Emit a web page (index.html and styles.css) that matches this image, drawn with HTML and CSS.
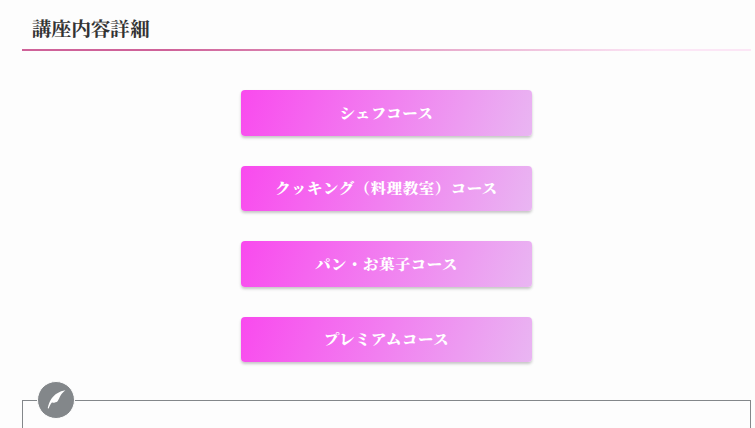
FILE: index.html
```html
<!DOCTYPE html>
<html lang="ja">
<head>
    <meta charset="UTF-8">
    <meta name="viewport" content="width=device-width, initial-scale=1">
    <title>講座内容詳細</title>
    <link rel="stylesheet" href="styles.css">
</head>
<body>
    <main class="content">
        <h2 class="section-title">講座内容詳細</h2>

        <nav class="course-list">
            <a href="#chef" class="course-btn">シェフコース</a>
            <a href="#cooking" class="course-btn">クッキング（料理教室）コース</a>
            <a href="#bread" class="course-btn">パン・お菓子コース</a>
            <a href="#premium" class="course-btn">プレミアムコース</a>
        </nav>

        <section class="memo-box">
            <span class="memo-icon">
                <svg viewBox="0 0 36 36" width="36" height="36">
                    <path d="M27.4 8.3C21.5 9.3 16.5 12.3 13.4 16.8C11.5 19.6 10.4 23 9.7 26.2L10.7 26.6C11.6 24.3 12.4 22.3 13.9 20.6C15.8 20.9 18.2 20.4 19.6 19.2C21 17.6 21.3 15.8 22.6 13.6C23.8 11.5 25.4 9.8 27.4 8.3Z" fill="#fff"/>
                </svg>
            </span>
        </section>
    </main>
</body>
</html>
```
FILE: styles.css
```css
* {
    box-sizing: border-box;
    margin: 0;
    padding: 0;
}

body {
    background: #fdfdfd;
    color: #333;
    font-family: "Noto Serif JP", "Noto Serif CJK JP", "Liberation Serif", "Noto Sans CJK JP", serif;
}

.content {
    width: 729px;
    margin-left: 22px;
}

.section-title {
    height: 51px;
    padding: 14px 10px 0;
    font-size: 19.6px;
    font-weight: bold;
    line-height: 28px;
    border-bottom: 2px solid;
    border-image: linear-gradient(to right, #cf6299 0%, #cf6299 20%, #fce6f6 87%) 1;
}

.course-list {
    display: flex;
    flex-direction: column;
    align-items: center;
    gap: 30px;
    padding-top: 39px;
}

.course-btn {
    width: 291px;
    height: 45.5px;
    padding-top: 0.75px;
    border-radius: 4px;
    background: linear-gradient(110deg, #f94aee, #e9b6f2);
    box-shadow: 0 2px 3px rgba(0, 0, 0, 0.22);
    color: #fff;
    font-size: 15.3px;
    font-weight: 900;
    letter-spacing: 0.7px;
    line-height: 42px;
    text-align: center;
    text-decoration: none;
}

.memo-box {
    position: relative;
    height: 28px;
    margin-top: 38px;
    border: 1px solid #83878a;
    border-bottom: none;
}

.memo-icon {
    position: absolute;
    top: -20px;
    left: 14px;
    width: 38px;
    height: 38px;
    border: 1px solid #fdfdfd;
    border-radius: 50%;
    background: #83878a;
}

.memo-icon svg {
    display: block;
}
```
